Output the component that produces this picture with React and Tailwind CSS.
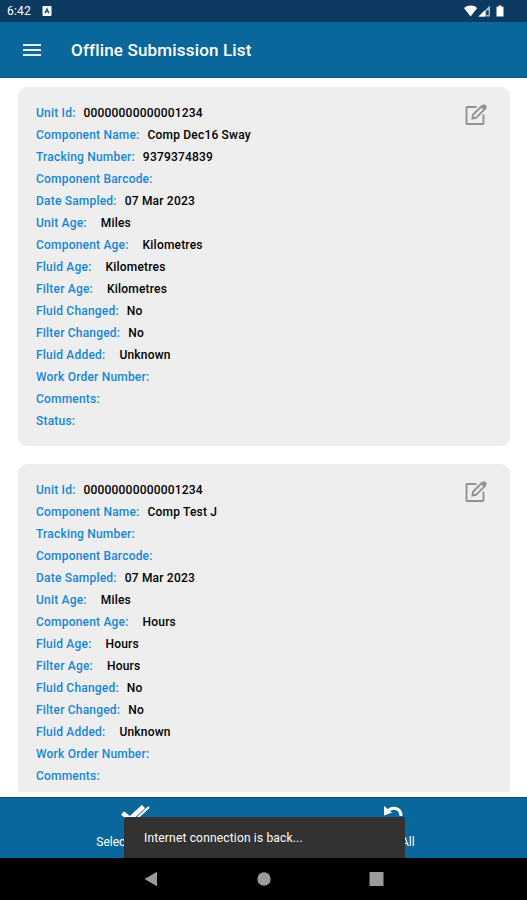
const submissions = [
  [
    { label: 'Unit Id:', value: '00000000000001234' },
    { label: 'Component Name:', value: 'Comp Dec16 Sway' },
    { label: 'Tracking Number:', value: '9379374839' },
    { label: 'Component Barcode:' },
    { label: 'Date Sampled:', value: '07 Mar 2023' },
    { label: 'Unit Age:', value: 'Miles', wide: true },
    { label: 'Component Age:', value: 'Kilometres', wide: true },
    { label: 'Fluid Age:', value: 'Kilometres', wide: true },
    { label: 'Filter Age:', value: 'Kilometres', wide: true },
    { label: 'Fluid Changed:', value: 'No' },
    { label: 'Filter Changed:', value: 'No' },
    { label: 'Fluid Added:', value: 'Unknown', wide: true },
    { label: 'Work Order Number:' },
    { label: 'Comments:' },
    { label: 'Status:' },
  ],
  [
    { label: 'Unit Id:', value: '00000000000001234' },
    { label: 'Component Name:', value: 'Comp Test J' },
    { label: 'Tracking Number:' },
    { label: 'Component Barcode:' },
    { label: 'Date Sampled:', value: '07 Mar 2023' },
    { label: 'Unit Age:', value: 'Miles', wide: true },
    { label: 'Component Age:', value: 'Hours', wide: true },
    { label: 'Fluid Age:', value: 'Hours', wide: true },
    { label: 'Filter Age:', value: 'Hours', wide: true },
    { label: 'Fluid Changed:', value: 'No' },
    { label: 'Filter Changed:', value: 'No' },
    { label: 'Fluid Added:', value: 'Unknown', wide: true },
    { label: 'Work Order Number:' },
    { label: 'Comments:' },
  ],
];

function StatusBar() {
  return (
    <div className="flex h-[22px] shrink-0 items-center bg-[#0d3a60] pl-[7px] pr-[23px] text-white">
      <span className="text-[12px] leading-none tracking-[0.2px]">6:42</span>
      <svg className="ml-[11px] h-[10px] w-[10px]" viewBox="0 0 10 10">
        <rect x="0.5" y="0" width="9" height="10" rx="1" fill="#fff" />
        <path d="M3 7.2L5 2.8L7 7.2M3.8 5.8H6.2" fill="none" stroke="#0d3a60" strokeWidth="1.1" />
      </svg>
      <svg className="ml-auto h-[12px] w-[40px]" viewBox="0 0 40 12">
        <path d="M0 3C3.5 -0.3 9.7 -0.3 13.2 3L6.6 11.5Z" fill="#fff" />
        <path d="M14.5 11.5L26 0.5V11.5Z" fill="#a9b8c6" />
        <path d="M14.5 11.5L21 5.3V11.5Z" fill="#fff" />
        <path d="M22.3 10V5.5H24.6V10Z" fill="#0d3a60" />
        <path d="M32.5 1.8H34.5V0.5H37.5V1.8H39.5V11.5H32.5Z" fill="#fff" />
      </svg>
    </div>
  );
}

function EditIcon() {
  return (
    <svg className="h-[24px] w-[24px]" viewBox="0 0 24 24" fill="none" stroke="#929292" strokeWidth="1.9">
      <path d="M12.5 4H3.2Q2.5 4 2.5 4.7V20.300Q2.5 21 3.2 21H18.800Q19.500 21 19.500 20.300V11.500" />
      <path d="M8.500 15.500L9 11.800L18 2.800L21 5.800L12 14.800Z" />
      <path d="M17 4L19.300 1.900Q20.300 1 21.300 2L22.200 2.900Q23 3.900 22.100 4.800L20 7Z" fill="#929292" strokeWidth="0.500" />
    </svg>
  );
}

function SubmissionCard({ rows }) {
  return (
    <div className="flex min-h-[359px] shrink-0 justify-between rounded-[9px] bg-[#eeeeee] pl-[18px] pr-[22px] pt-[15px]">
      <div>
        {rows.map((row) => (
          <div key={row.label} className="flex h-[22px] items-center whitespace-nowrap text-[12px] font-medium leading-[22px] tracking-[0.2px]">
            <span className="text-[#1687d6]">{row.label}</span>
            {row.value && (
              <span className={row.wide ? 'ml-[14px] text-black' : 'ml-[8px] text-black'}>{row.value}</span>
            )}
          </div>
        ))}
      </div>
      <div className="pt-px">
        <EditIcon />
      </div>
    </div>
  );
}

export default function App() {
  return (
    <div className="relative flex h-[900px] w-[527px] flex-col overflow-hidden bg-white font-['Roboto',sans-serif]">
      <StatusBar />

      {/* Toolbar */}
      <header className="flex h-[56px] shrink-0 items-center border-b border-[#075687] bg-[#09679c] pl-[23px] text-white">
        <svg className="h-[12px] w-[18px]" viewBox="0 0 18 12" stroke="#e8eef8" strokeWidth="2">
          <path d="M0 1H18M0 6H18M0 11H18" />
        </svg>
        <h1 className="ml-[30px] pt-[2px] text-[17px] font-medium leading-none tracking-[0.17px]">Offline Submission List</h1>
      </header>

      {/* Submissions */}
      <main className="mb-[5px] flex min-h-0 flex-1 flex-col gap-[18px] overflow-hidden pl-[18px] pr-[17px] pt-[9px]">
        {submissions.map((rows, index) => (
          <SubmissionCard key={index} rows={rows} />
        ))}
      </main>

      {/* Actions */}
      <footer className="flex h-[61px] shrink-0 border-t border-[#075687] bg-[#09679c] text-white">
        <div className="flex w-1/2 flex-col items-center pl-[8px] pt-[7px]">
          <svg className="h-[20px] w-[30px]" viewBox="0 0 30 20" fill="none" stroke="#fff">
            <path d="M1.500 8L9 14L22.500 1.500" strokeWidth="4.500" />
            <path d="M14 15L28 2" strokeWidth="2" />
          </svg>
          <span className="mt-[9px] text-[12px] leading-[16px]">Select Multiple</span>
        </div>
        <div className="flex w-1/2 flex-col items-center pr-[6px] pt-[7px]">
          <svg className="ml-[2px] h-[20px] w-[22px]" viewBox="0 0 22 20" fill="none">
            <path d="M2 1V10.500L10 7.500Z" fill="#fff" />
            <path d="M5 7C10 0.500 19 3 19 11" stroke="#fff" strokeWidth="3" />
          </svg>
          <span className="mt-[9px] text-[12px] leading-[16px]">Undo All</span>
        </div>
      </footer>

      {/* System navigation */}
      <nav className="flex h-[42px] shrink-0 items-center bg-black pl-[144px]">
        <svg className="h-[16px] w-[240px]" viewBox="0 0 240 16" fill="#9b9b9b">
          <path d="M0.5 8L13 0.8V15.2Z" />
          <circle cx="120" cy="8" r="6.7" />
          <rect x="225.5" y="1" width="14" height="14" rx="0.5" />
        </svg>
      </nav>

      {/* Snackbar */}
      <div className="absolute bottom-[42px] left-[124px] flex h-[41px] w-[281px] items-center rounded-t-[2px] bg-[#323232] pl-[20px] pt-[1px] text-[12px] tracking-[0.17px] text-white">
        Internet connection is back...
      </div>
    </div>
  );
}
